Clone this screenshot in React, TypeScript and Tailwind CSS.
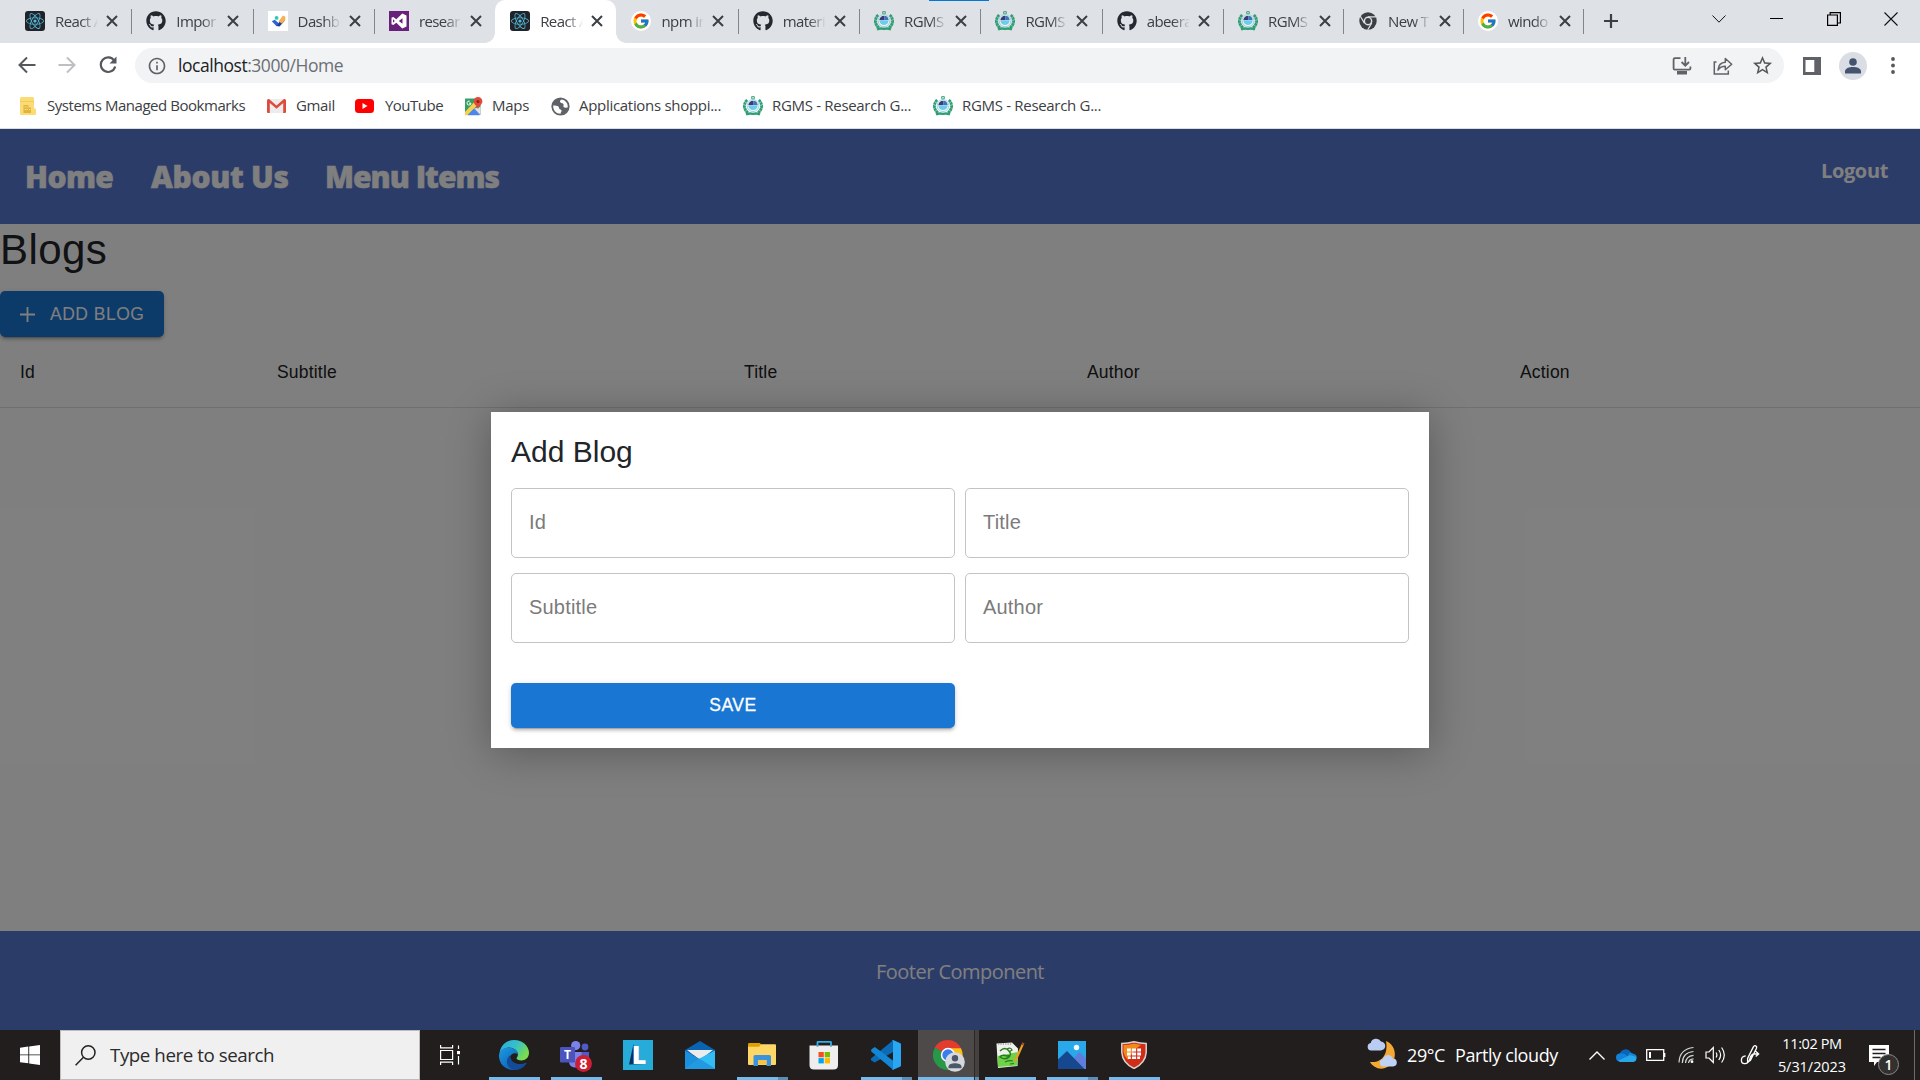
import type { ReactNode } from "react";
import { FaGithub, FaReact } from "react-icons/fa";
import { FcGoogle } from "react-icons/fc";
import { MdInfoOutline, MdStarBorder } from "react-icons/md";

/* ---------- favicons ---------- */

function ReactMark() {
  return (
    <span className="flex size-5 items-center justify-center rounded-[3px] bg-[#20232a]">
      <FaReact className="size-[18px] text-[#53b9d5]" />
    </span>
  );
}

function GitHubMark() {
  return <FaGithub className="size-5 text-[#24292f]" />;
}

function GoogleMark() {
  return (
    <span className="flex size-5 items-center justify-center rounded-full bg-white">
      <FcGoogle className="size-[18px]" />
    </span>
  );
}

function DashboardMark() {
  return (
    <svg viewBox="0 0 20 20" className="size-5">
      <rect width="20" height="20" fill="#fff" />
      <path d="M3.800 10.300l3-1.600 4 3.600-2.200 3z" fill="#2b63d9" />
      <path d="M8.400 15L13.800 7.500l3.100 2-5.300 6z" fill="#1d3f9b" />
      <path d="M10.500 10.500l4.500-6 2.300 1.200v3.200l-3.500 3.600z" fill="#f8ae52" />
      <circle cx="8.600" cy="6.900" r="1.900" fill="#30c7b5" />
    </svg>
  );
}

function VisualStudioMark() {
  return (
    <svg viewBox="0 0 20 20" className="size-5">
      <rect width="20" height="20" fill="#68217a" />
      <path d="M13.300 2.600L17.500 4.400v11.200l-4.200 1.800-6-5.600-3 2.300-1.800-.9V6.800l1.800-.9 3 2.300zM13.500 7.200L9.800 10l3.700 2.800zM4 8.200v3.600L5.800 10z" fill="#fff" fillRule="evenodd" />
    </svg>
  );
}

function RgmsMark() {
  return (
    <svg viewBox="0 0 20 20" className="size-5">
      <path d="M4.200 4C.4 7.200.4 13.600 5 16.800M15.800 4c3.800 3.200 3.800 9.600-.8 12.800" fill="none" stroke="#2f9e74" strokeWidth="2.900" strokeDasharray="2.600 .4" />
      <path d="M3 18.300q3.500-1.500 7-.4q3.500-1.100 7 .4" fill="none" stroke="#2f9e74" strokeWidth="2.400" />
      <circle cx="10" cy="1.700" r="1.400" fill="none" stroke="#4fae88" strokeWidth="1.200" />
      <circle cx="10" cy="9.600" r="5.900" fill="#fff" stroke="#8ccbd8" strokeWidth=".9" />
      <path d="M5.300 9.300a4.700 4.700 0 0 1 4.900-4.600v4.600z" fill="#383c78" />
      <path d="M10.200 4.700a4.700 4.700 0 0 1 4.500 4.600h-4.500z" fill="#4273b8" />
      <path d="M5.300 9.400h9.400a4.700 4.700 0 0 1-9.400 0z" fill="#6bcdec" />
    </svg>
  );
}

function ChromeGrayMark() {
  return (
    <svg viewBox="0 0 20 20" className="size-5">
      <circle cx="10" cy="10" r="8.700" fill="#3c4043" />
      <circle cx="10" cy="10" r="4.400" fill="#dee1e6" />
      <circle cx="10" cy="10" r="2.900" fill="#3c4043" />
      <path d="M10 5.800h8M6.400 12.100L2.300 5.300M13.700 12.100L9.700 18.700" stroke="#dee1e6" strokeWidth="1.200" />
    </svg>
  );
}

function GlobeMark() {
  return (
    <svg viewBox="0 0 20 20" className="mx-px size-[19px]">
      <circle cx="10" cy="10" r="9.600" fill="#5f6368" />
      <path d="M11.500 2.500C9.500 3 9 4.500 9.800 5.600c1.200 1.400 3 .6 3.400 2 .4 1.300-1 2.200.4 3.200 1.200.8 3.400.2 4 .2.500-4-2-7.600-6.100-8.500z" fill="#fff" />
      <path d="M2.300 9c1.700.2 4.700 0 5.700 1.300.8 1.100.2 2 1.300 2.500 1.200.6 2 .6 1.800 1.900-.2 1.200-1 1.500-1 3C5.500 17.700 2 14 2.300 9z" fill="#fff" />
    </svg>
  );
}

/* ---------- browser chrome ---------- */

type Tab = { title: string; icon: ReactNode };

const tabs: Tab[] = [
  { title: "React A", icon: <ReactMark /> },
  { title: "Impor", icon: <GitHubMark /> },
  { title: "Dashb", icon: <DashboardMark /> },
  { title: "resear", icon: <VisualStudioMark /> },
  { title: "React A", icon: <ReactMark /> },
  { title: "npm in", icon: <GoogleMark /> },
  { title: "materi", icon: <GitHubMark /> },
  { title: "RGMS", icon: <RgmsMark /> },
  { title: "RGMS", icon: <RgmsMark /> },
  { title: "abeera", icon: <GitHubMark /> },
  { title: "RGMS", icon: <RgmsMark /> },
  { title: "New T", icon: <ChromeGrayMark /> },
  { title: "windo", icon: <GoogleMark /> },
];

const ACTIVE = 4;

function TabItem({ tab, index }: { tab: Tab; index: number }) {
  const active = index === ACTIVE;
  return (
    <div
      className={
        "relative flex h-[43px] shrink-0 items-center pb-px pl-[15px] " +
        (index > 9 ? "w-[120px] " : "w-[121.3px] ") +
        (active ? "rounded-t-[10px] bg-white" : "")
      }
    >
      {tab.icon}
      <span className="ml-[10px] w-[43px] overflow-hidden text-[15px] leading-[20px] tracking-[-0.6px] whitespace-nowrap text-[#3c4043] [mask-image:linear-gradient(to_right,black_60%,transparent)]">
        {tab.title}
      </span>
      <svg viewBox="0 0 12 12" className="ml-[8px] size-3" stroke="#3c4043" strokeWidth="2">
        <path d="M1 1l10 10M11 1L1 11" />
      </svg>
      {index !== ACTIVE && index !== ACTIVE - 1 && <span className="absolute top-[9px] -right-px h-[25px] w-px bg-[#80868b]" />}
      {active && (
        <>
          <span className="absolute bottom-0 -left-[10px] size-[10px] bg-[radial-gradient(circle_at_0_0,transparent_9.5px,white_10px)]" />
          <span className="absolute -right-[10px] bottom-0 size-[10px] bg-[radial-gradient(circle_at_100%_0,transparent_9.5px,white_10px)]" />
        </>
      )}
    </div>
  );
}

function WindowControls() {
  const cell = "flex h-[37px] w-[57.5px] items-center justify-center";
  return (
    <div className="ml-auto flex">
      <div className={cell}>
        <svg viewBox="0 0 14 8" className="h-2 w-3.5" fill="none" stroke="#111" strokeWidth="1">
          <path d="M.5.500L7 7.200 13.500.500" />
        </svg>
      </div>
      <div className={cell}>
        <span className="h-px w-[13px] bg-black" />
      </div>
      <div className={cell}>
        <svg viewBox="0 0 14 14" className="size-3.5" fill="none" stroke="#000" strokeWidth="1.200">
          <path d="M.6 3h9.800v10.400H.6zM3.200 3V.600h10.200v10.400h-3" />
        </svg>
      </div>
      <div className={cell}>
        <svg viewBox="0 0 14 14" className="size-3.5" stroke="#111" strokeWidth="1.100">
          <path d="M.5.500l13 13M13.500.500l-13 13" />
        </svg>
      </div>
    </div>
  );
}

function TabStrip() {
  return (
    <div className="relative flex h-[43px] shrink-0 bg-[#dee1e6] pl-[10px]">
      {tabs.map((tab, i) => (
        <TabItem key={i} tab={tab} index={i} />
      ))}
      <div className="flex w-[56px] items-center justify-center pb-px">
        <svg viewBox="0 0 14 14" className="size-3.5" stroke="#3c4043" strokeWidth="2.200">
          <path d="M7 0v14M0 7h14" />
        </svg>
      </div>
      <WindowControls />
      <span className="absolute top-0 left-[929px] h-px w-[60px] bg-[#0078d7]" />
    </div>
  );
}

function AddressBar() {
  return (
    <div className="flex h-[45px] shrink-0 items-center bg-white">
      <div className="flex w-[135px] items-center pb-px pl-[18px]">
        <svg viewBox="0 0 18 18" className="size-[18px]" fill="none" stroke="#55585c" strokeWidth="2">
          <path d="M17.500 9H2M9 1.500L1.500 9 9 16.500" />
        </svg>
        <svg viewBox="0 0 18 18" className="ml-[22px] size-[18px]" fill="none" stroke="#bdbfc2" strokeWidth="2">
          <path d="M.5 9H16M9 1.500L16.500 9 9 16.500" />
        </svg>
        <svg viewBox="0 0 18 18" className="ml-[23px] size-[18px]" fill="none" stroke="#55585c" strokeWidth="2.200">
          <path d="M15.200 4.600A7.300 7.300 0 1 0 16.200 10.500" />
          <path d="M17.500.500v7h-7z" fill="#55585c" stroke="none" />
        </svg>
      </div>
      <div className="flex h-[35px] w-[1649px] items-center rounded-full bg-[#f1f3f4] pl-[12px]">
        <MdInfoOutline className="size-5 text-[#5f6368]" />
        <p className="mb-px ml-[11px] text-[17.5px] leading-[24px] tracking-[-0.46px] text-[#6b6f74]">
          <span className="text-[#202124]">localhost</span>:3000/Home
        </p>
        <svg viewBox="0 0 20 18" className="ml-auto h-[18px] w-5" fill="none" stroke="#5f6368" strokeWidth="1.800">
          <path d="M8.500 1.200H2.800q-1.200 0-1.200 1.200v9q0 1.200 1.200 1.200h14.400q1.200 0 1.200-1.200V9.500" />
          <path d="M13.300 0v8M9.600 5l3.700 3.700L17 5" />
          <path d="M5 14h10v3.500H5z" fill="#5f6368" stroke="none" />
        </svg>
        <svg viewBox="0 0 20 18" className="ml-[21px] h-[18px] w-5" fill="none" stroke="#5f6368" strokeWidth="1.500">
          <path d="M3.500 5H1.300v12h14v-3.500" />
          <path d="M5 13c.4-5 3-7.600 7.300-7.800V1.500l6.400 5.700-6.400 5.600V9.300C9 9.300 6.700 10.400 5 13z" strokeLinejoin="round" />
        </svg>
        <MdStarBorder className="mr-[10px] ml-[18px] size-[23px] text-[#55585c]" />
      </div>
      <div className="flex flex-1 items-center">
        <svg viewBox="0 0 18 18" className="ml-[19px] size-[18px]">
          <path d="M0 0h18v18H0zM2.500 3v12h8.800V3z" fill="#5f6368" fillRule="evenodd" />
        </svg>
        <span className="ml-[18px] flex size-7 items-center justify-center rounded-full bg-[#dadde4]">
          <svg viewBox="0 0 16 16" className="size-4" fill="#44546f">
            <circle cx="8" cy="4" r="3.800" />
            <path d="M0 15.500v-2.300C0 10.500 4 9 8 9s8 1.500 8 4.200v2.300z" />
          </svg>
        </span>
        <svg viewBox="0 0 4 17" className="ml-[24px] h-[17px] w-1" fill="#55585c">
          <circle cx="2" cy="2" r="1.900" />
          <circle cx="2" cy="8.500" r="1.900" />
          <circle cx="2" cy="15" r="1.900" />
        </svg>
      </div>
    </div>
  );
}

function FolderMark() {
  return (
    <svg viewBox="0 0 16 18" className="h-[18px] w-4">
      <path d="M1.500 0h11q1.500 0 1.500 1.500V11l2 1v4.500q0 1.500-1.500 1.500h-13Q0 18 0 16.500v-15Q0 0 1.500 0z" fill="#fadb75" />
      <path d="M0 4h14v1H0z" fill="#f5cd54" />
      <path d="M3.500 8h5v8h-5zM8.500 10.500H11V16H8.500z" fill="#e2b53a" />
      <path d="M4.700 9.500h1v1h-1zM6.600 9.500h1v1h-1zM4.700 12h1v1h-1zM6.600 12h1v1h-1zM9.300 12h1v1h-1z" fill="#fff0b8" />
    </svg>
  );
}

function GmailMark() {
  return (
    <svg viewBox="0 0 19 14" className="h-3.5 w-[19px]">
      <path d="M1 0h17v14H1z" fill="#ececec" />
      <path d="M0 1.500Q0 0 1.500 0H2l7.500 6.500L17 0h.5Q19 0 19 1.500V13q0 1-1 1h-1.800V4L9.500 9.800 2.800 4v10H1q-1 0-1-1z" fill="#dd4b3e" />
    </svg>
  );
}

function YouTubeMark() {
  return (
    <svg viewBox="0 0 19 14" className="h-3.5 w-[19px]">
      <rect width="19" height="14" rx="3.500" fill="#f00" />
      <path d="M7.500 4v6l5-3z" fill="#fff" />
    </svg>
  );
}

function MapsMark() {
  return (
    <svg viewBox="0 0 19 19" className="size-[19px]">
      <path d="M1.500 1.500h12l3 3v12l-1.500 1.500H2L1 17V2z" fill="#34a064" />
      <path d="M9 9l7.500 8v1H2z" fill="#5b92ee" />
      <path d="M1 15L13 2l3.500 3L3.500 18.200H1z" fill="#f7d04c" />
      <path d="M3.500 18.200L9.500 12l6 6.200z" fill="#4d86e8" />
      <path d="M16.500 10v8l-6-6.500z" fill="#e4e4e4" />
      <path d="M5.700 4.200a2 2 0 1 0 1.300 2H5" fill="none" stroke="#fff" strokeWidth="1" />
      <path d="M14 0a4.400 4.400 0 0 1 4.400 4.400c0 2.800-3.400 3.900-4.400 8-1-4.100-4.400-5.200-4.400-8A4.400 4.400 0 0 1 14 0z" fill="#e2493b" />
      <circle cx="14" cy="4.400" r="1.500" fill="#8a2119" />
    </svg>
  );
}

function Bookmark({ icon, className, children }: { icon: ReactNode; className: string; children: ReactNode }) {
  return (
    <div className={"flex items-center text-[15px] leading-[20px] whitespace-nowrap text-[#3c4043] " + className}>
      {icon}
      <span className="mb-[2px]">{children}</span>
    </div>
  );
}

function BookmarksBar() {
  return (
    <div className="flex h-[41px] shrink-0 items-center border-b border-[#dadce0] bg-white pb-[4px] pl-[20px]">
      <Bookmark icon={<FolderMark />} className="w-[247px] gap-[11px] tracking-[-0.46px]">Systems Managed Bookmarks</Bookmark>
      <Bookmark icon={<GmailMark />} className="w-[88px] gap-[10px] tracking-[-0.34px]">Gmail</Bookmark>
      <Bookmark icon={<YouTubeMark />} className="w-[109px] gap-[11px] tracking-[-0.52px]">YouTube</Bookmark>
      <Bookmark icon={<MapsMark />} className="w-[86px] gap-[9px] tracking-[-0.29px]">Maps</Bookmark>
      <Bookmark icon={<GlobeMark />} className="w-[193px] gap-[8px] tracking-[-0.3px]">Applications shoppi...</Bookmark>
      <Bookmark icon={<RgmsMark />} className="w-[190px] gap-[9px] tracking-[-0.31px]">RGMS - Research G...</Bookmark>
      <Bookmark icon={<RgmsMark />} className="gap-[9px] tracking-[-0.31px]">RGMS - Research G...</Bookmark>
    </div>
  );
}

/* ---------- page ---------- */

function SiteHeader() {
  return (
    <header className="flex h-[95px] shrink-0 justify-between bg-[#5878d2] text-white">
      <nav className="flex pt-[28px] pl-[25px] text-[30px] leading-[40px] font-extrabold whitespace-nowrap [-webkit-text-stroke:0.5px_white]">
        <span className="w-[126px] tracking-[-0.6px]">Home</span>
        <span className="w-[174px] tracking-[-0.3px]">About Us</span>
        <span className="tracking-[-0.98px]">Menu Items</span>
      </nav>
      <span className="pt-[30px] pr-[32px] text-[20px] leading-[24px] font-bold tracking-[-0.36px]">Logout</span>
    </header>
  );
}

function BlogTable() {
  return (
    <div className="grid h-[71px] grid-cols-[257px_467px_343px_433px_1fr] border-b border-[#e0e0e0] font-['Liberation_Sans',Arial,sans-serif] text-[17.5px] leading-[30px] tracking-[0.19px] text-[#212121]">
      {["Id", "Subtitle", "Title", "Author", "Action"].map((h) => (
        <span key={h} className="pt-[20px] pl-[20px]">{h}</span>
      ))}
    </div>
  );
}

function Field({ label }: { label: string }) {
  return (
    <div className="flex h-[70px] items-center rounded-[5px] border border-[#c4c4c4] pb-[2px] pl-[17px] text-[20px] leading-[28px] tracking-[0.19px] text-[#7b7b7b]">
      {label}
    </div>
  );
}

function AddBlogDialog() {
  return (
    <div className="h-[336px] w-[938px] bg-white p-[20px] font-['Liberation_Sans',Arial,sans-serif] shadow-[0_4px_40px_rgba(0,0,0,0.3)]">
      <h2 className="text-[30px] leading-[40px] text-[#212529]">Add Blog</h2>
      <div className="mt-[16px] grid grid-cols-2 gap-x-[10px] gap-y-[15px]">
        <Field label="Id" />
        <Field label="Title" />
        <Field label="Subtitle" />
        <Field label="Author" />
        <button className="mt-[25px] h-[45px] rounded-[5px] bg-[#1976d2] pb-px text-[17.5px] font-normal tracking-[0.5px] text-white shadow-[0_4px_1px_-3px_rgba(0,0,0,0.2),0_3px_3px_0_rgba(0,0,0,0.14),0_1px_6px_0_rgba(0,0,0,0.12)] [-webkit-text-stroke:0.3px_white]">
          SAVE
        </button>
      </div>
    </div>
  );
}

function BlogPage() {
  return (
    <main className="relative flex h-[901px] shrink-0 flex-col bg-white">
      <SiteHeader />
      <h1 className="pt-px font-['Liberation_Sans',Arial,sans-serif] text-[42px] leading-[50px] tracking-[0.4px] text-[#212529]">Blogs</h1>
      <button className="mt-[16px] flex h-[46px] w-[164px] items-center rounded-[5px] bg-[#1976d2] pl-[20px] font-['Liberation_Sans',Arial,sans-serif] text-[17.5px] tracking-[0.5px] text-white shadow-[0_4px_1px_-3px_rgba(0,0,0,0.2),0_3px_3px_0_rgba(0,0,0,0.14),0_1px_6px_0_rgba(0,0,0,0.12)]">
        <svg viewBox="0 0 15 15" className="mr-[15px] size-[15px]" stroke="white" strokeWidth="1.800">
          <path d="M7.500 0v15M0 7.500h15" />
        </svg>
        ADD BLOG
      </button>
      <BlogTable />
      <footer className="mt-auto h-[99px] bg-[#5878d2] pt-[29px] text-center text-[20px] leading-[24px] tracking-[-0.53px] text-white">
        Footer Component
      </footer>
      <div className="absolute inset-0 flex items-start bg-black/50 pt-[283px] pl-[491px]">
        <AddBlogDialog />
      </div>
    </main>
  );
}

/* ---------- taskbar ---------- */

function EdgeIcon() {
  return (
    <svg viewBox="0 0 30 30" className="size-[30px]">
      <defs>
        <linearGradient id="edgeTop" x1="0" y1="0" x2="1" y2=".5">
          <stop offset="0" stopColor="#2aa9e0" />
          <stop offset=".55" stopColor="#35c1c9" />
          <stop offset="1" stopColor="#7bdc4c" />
        </linearGradient>
        <linearGradient id="edgeLow" x1="0" y1="0" x2=".7" y2="1">
          <stop offset="0" stopColor="#1b9de2" />
          <stop offset="1" stopColor="#0f5fb5" />
        </linearGradient>
      </defs>
      <path d="M.6 13C1.500 5.500 7.500 0 15.200 0 23.500 0 30 6 30 12.800c0 5-3.700 7.700-7.600 7.700-3.400 0-5.300-1.400-4.800-2.500 1-1.500 1.300-2.400 1.300-3.600 0-3.900-4.300-6.900-9-6.900-4 0-7.400 2.200-9.300 5.500z" fill="url(#edgeTop)" />
      <path d="M0 15C.4 10.500 4.600 7.500 9.500 7.500c5 0 9.400 3 9.400 6.600-4.400-2.300-8.400 1-8.400 5.400 0 5.300 4.200 9.200 8.500 10-8 2.500-19.500-3-19-14.500z" fill="url(#edgeLow)" />
      <path d="M11 15.200c-2 1.800-3.400 4-3.100 7 .4 3.900 3.600 7.200 8 7.800 5.200-.3 9.200-2.800 11.600-6.600.3-.6-.2-1-.8-.6-4.800 2.400-13 1.400-14.800-4-.4-1.300-.4-2.500-.9-3.600z" fill="#124c98" />
    </svg>
  );
}

function TeamsIcon() {
  return (
    <span className="relative block h-[30px] w-8">
      <svg viewBox="0 0 32 30" className="h-[30px] w-8">
        <circle cx="25" cy="7" r="3.400" fill="#5059c9" />
        <circle cx="15.700" cy="5.600" r="4.600" fill="#7b83eb" />
        <path d="M20 12h9v9q-1 4-6 4h-3z" fill="#5059c9" />
        <path d="M9 12h12.500v9q0 6.500-6 6.500-5.500 0-6.500-5z" fill="#7b83eb" />
        <rect y="7" width="15" height="15.500" rx="1.200" fill="#4b53bc" />
      </svg>
      <span className="absolute top-[7px] left-0 w-[15px] text-center text-[12px] leading-[15px] font-bold text-white">T</span>
      <span className="absolute top-[15px] left-[15px] size-[17px] rounded-full bg-[#cc1f36] text-center text-[14px] leading-[17px] font-bold text-white">8</span>
    </span>
  );
}

function LIcon() {
  return (
    <span className="relative flex size-[30px] items-center justify-center bg-[#27abd9]">
      <svg viewBox="0 0 30 30" className="absolute inset-0">
        <path d="M10.500 4L6 24.500l15-.6-8-4z" fill="#0b3156" />
      </svg>
      <span className="relative -top-px left-px text-[25px] leading-[28px] font-extrabold text-white">L</span>
    </span>
  );
}

function MailIcon() {
  return (
    <svg viewBox="0 0 30 28" className="h-7 w-[30px]">
      <path d="M0 9L15 0l15 9v5H0z" fill="#0a63b0" />
      <path d="M2 9h26L15 19z" fill="#ececec" />
      <path d="M0 9.500L30 27v1H1q-1 0-1-1z" fill="#1b90dd" />
      <path d="M30 9.500v17.700q0 .8-1 .8L14 17.800z" fill="#33bcf2" />
      <path d="M14 17.500L0 27.500q.3.500 1 .5h28q.8 0 1-.6z" fill="#2199e3" />
    </svg>
  );
}

function ExplorerIcon() {
  return (
    <svg viewBox="0 0 28 24" className="h-6 w-7">
      <path d="M0 1.200Q0 0 1.200 0H12l2 3v4H0z" fill="#e0a000" />
      <path d="M0 3.800h11l2-2.500h14q1 0 1 1V21q0 1-1 1H1q-1 0-1-1z" fill="#ffd766" />
      <path d="M5.500 13.500Q5.500 12 7 12h14.500q1.500 0 1.500 1.500V23h-4.500v-6h-8.500v6H5.500z" fill="#3b93db" />
      <path d="M10 17h8.500v4.500H10z" fill="#f6c348" />
    </svg>
  );
}

function StoreIcon() {
  return (
    <svg viewBox="0 0 30 30" className="size-[30px]">
      <path d="M8.500 8V2.300Q8.500 1.800 9 1.800h12.500q.5 0 .5.500V8" fill="none" stroke="#2fb0ea" strokeWidth="1.800" />
      <path d="M.5 5.500H29V25q0 4.500-4.500 4.500H5Q.5 29.500.5 25z" fill="#eeeeee" />
      <path d="M8.500 5.500v1M22 5.500v1" stroke="#1374b8" strokeWidth="1.800" />
      <path d="M9.500 12h5.300v5.300H9.500z" fill="#f25022" />
      <path d="M15.700 12H21v5.300h-5.300z" fill="#7fba00" />
      <path d="M9.500 18.100h5.300v5.300H9.500z" fill="#00a4ef" />
      <path d="M15.700 18.100H21v5.300h-5.300z" fill="#ffb900" />
    </svg>
  );
}

function VsCodeIcon() {
  return (
    <svg viewBox="0 0 30 30" className="size-[30px]">
      <path d="M22.400 0L30 3.500v4L3.600 22.400 0 20.200v-1.700z" fill="#0b6cb5" />
      <path d="M.5 9.300L3.800 7l19.700 14.700L22.400 30 0 11.300z" fill="#1387d6" />
      <path d="M22.200.2L29 3.300q1 .5 1 1.500v20.400q0 1-1 1.500l-6.800 3.100q-.8.200-1.500-.5 1.300.5 1.300-1.300V2q0-1.700-1.300-1.300.7-.7 1.500-.5z" fill="#2aa6f2" />
    </svg>
  );
}

function ChromeIcon() {
  return (
    <svg viewBox="0 0 32 32" className="size-8">
      <path d="M14.500 15L1.600 7.600A15 15 0 0 1 28 8.200z" fill="#e33b2e" />
      <path d="M14.500 15V8.200H28A15 15 0 0 1 15 30z" fill="#fbc116" />
      <path d="M14.500 15l1 15A15 15 0 0 1 2 7.500z" fill="#279847" />
      <circle cx="15" cy="15" r="7.200" fill="#fff" />
      <circle cx="15" cy="15" r="5.700" fill="#3b7ded" />
      <circle cx="22" cy="22" r="9.800" fill="#d5d9df" />
      <circle cx="22" cy="18.300" r="3.200" fill="#4c5768" />
      <path d="M15.500 28.200v-1.500c0-2.600 3.500-3.500 6.500-3.500s6.500.900 6.500 3.500v1.500z" fill="#4c5768" />
    </svg>
  );
}

function NotepadIcon() {
  return (
    <svg viewBox="0 0 30 30" className="size-[30px]">
      <path d="M1.500 3.500L17 2.500l6 6-.5 17.500L3 28z" fill="#eef1ec" />
      <path d="M2.600 16l20-4-.3 13.500L3 27z" fill="#6fd24a" />
      <path d="M5 11q5-5 9 0t-2 5q-5-2-7 1 6 4 10-1" fill="none" stroke="#2a7a1e" strokeWidth="1.500" />
      <path d="M12 9q4-2 5 1l-3 2M10 22q4-2 8-1M15 24l4-.5" fill="none" stroke="#2a7a1e" strokeWidth="1.200" />
      <path d="M3 4h14" stroke="#9aa09a" strokeWidth="1.500" strokeDasharray="1.200 1.200" />
      <path d="M27.500 2.500l1.800 1L22 20l-2.500 2 .4-3.500z" fill="#e8a021" />
      <path d="M27.500 2.500l1.800 1-1 2-1.800-1z" fill="#a8432c" />
    </svg>
  );
}

function PhotosIcon() {
  return (
    <svg viewBox="0 0 28 28" className="size-7">
      <path d="M0 0h28v28H0z" fill="#29a8ea" />
      <path d="M11 22L21.500 11 28 17.500V28H11z" fill="#5f7edb" />
      <path d="M0 18.500L9 10l17.500 18H0z" fill="#15488f" />
      <circle cx="18.500" cy="6.500" r="2.700" fill="#f3fbff" />
    </svg>
  );
}

function ShieldIcon() {
  return (
    <svg viewBox="0 0 26 28" className="h-7 w-[26px]">
      <path d="M.8 2.500Q7 2.500 13 .7q6 1.800 12.200 1.800v9Q24.500 22 13 27.500 1.500 22 .8 11.500z" fill="#cf2d18" stroke="#d8d3cc" strokeWidth="1.500" />
      <path d="M2.500 4Q8 4 13 2.500L20 4q-8 5-13 15Q3 15 2.500 11z" fill="#f08a1d" />
      <path d="M6 7.500h3.800v3H6zM10.900 7.500h4.200v3h-4.200zM16.200 7.500H20v3h-3.800zM6 11.500h3.800v3H6zM10.900 11.500h4.200v3h-4.200zM16.200 11.500H20v3h-3.800zM7 15.500h2.800V18H7zM10.900 15.500h4.200V18h-4.200zM16.200 15.500H19V18h-2.800z" fill="#fff" />
    </svg>
  );
}

type TaskApp = { name: string; icon: ReactNode; state: "idle" | "open" | "stacked" | "focused" };

const apps: TaskApp[] = [
  { name: "edge", icon: <EdgeIcon />, state: "open" },
  { name: "teams", icon: <TeamsIcon />, state: "open" },
  { name: "l", icon: <LIcon />, state: "idle" },
  { name: "mail", icon: <MailIcon />, state: "idle" },
  { name: "explorer", icon: <ExplorerIcon />, state: "stacked" },
  { name: "store", icon: <StoreIcon />, state: "idle" },
  { name: "vscode", icon: <VsCodeIcon />, state: "stacked" },
  { name: "chrome", icon: <ChromeIcon />, state: "focused" },
  { name: "notepad", icon: <NotepadIcon />, state: "open" },
  { name: "photos", icon: <PhotosIcon />, state: "stacked" },
  { name: "shield", icon: <ShieldIcon />, state: "open" },
];

function TaskbarApp({ app }: { app: TaskApp }) {
  if (app.state === "focused") {
    return (
      <div className="flex h-[50px] w-[62px] shrink-0 pl-px">
        <div className="flex w-[56px] shrink-0 flex-col items-center bg-[#4d4a49]">
          <span className="flex flex-1 items-center pt-[5px] pl-[6px]">{app.icon}</span>
          <span className="h-[3px] w-full bg-[#76b9ed]" />
        </div>
        <div className="flex w-[5px] shrink-0 flex-col border-l border-[#2c2a29] bg-[#444140]">
          <span className="mt-auto h-[3px] bg-[#5b8db5]" />
        </div>
      </div>
    );
  }
  return (
    <div className="flex h-[50px] w-[62px] shrink-0 flex-col items-center">
      <span className="flex flex-1 items-center pt-[3px]">{app.icon}</span>
      <span className="flex h-[3px] w-[51px]">
        {app.state !== "idle" && <span className="flex-1 bg-[#76b9ed]" />}
        {app.state === "stacked" && <span className="w-[10px] bg-[#5b8db5]" />}
      </span>
    </div>
  );
}

function WeatherIcon() {
  return (
    <svg viewBox="0 0 30 31" className="h-[31px] w-[30px]">
      <path d="M19 3c12 5 12 22-1 27-6 2-12-1-15-6 8 1 19-4 16-21z" fill="#f4a934" />
      <path d="M4 12.500a3.800 3.800 0 0 1-.3-7.500A5.600 5.600 0 0 1 14 3.500a4.500 4.500 0 0 1-.5 9z" fill="#b9cdf3" />
      <path d="M16 28.500a3.800 3.800 0 0 1 0-7.500 5 5 0 0 1 9.600-.5 4 4 0 0 1 .4 8z" fill="#bfd2f5" />
    </svg>
  );
}

function Tray() {
  return (
    <div className="ml-auto flex h-full items-center text-white">
      <span className="mb-[3px]">
        <WeatherIcon />
      </span>
      <span className="ml-[10px] w-[48px] text-[18px] tracking-[-0.4px] whitespace-nowrap">29°C</span>
      <span className="w-[134px] text-[18px] tracking-[-0.38px] whitespace-nowrap">Partly cloudy</span>
      <svg viewBox="0 0 16 9" className="h-[9px] w-4" fill="none" stroke="#fff" strokeWidth="1.400">
        <path d="M.5 8.500L8 1l7.500 7.500" />
      </svg>
      <svg viewBox="0 0 21 14" className="ml-[11px] h-3.5 w-[21px]">
        <path d="M3.500 8A6.200 6.200 0 0 1 14.800 4L17 8.500 6 12z" fill="#0a64b8" />
        <path d="M13 5a5 5 0 0 1 4.300.8 4 4 0 0 1 3.400 4.500L12 8z" fill="#1483d5" />
        <path d="M4 5.500q3.500-.8 6 1.500l8 6.500H4a4 4 0 0 1 0-8z" fill="#1182d8" />
        <path d="M2 12.800L11 8.500q3.500-2.300 6-.5a3 3 0 0 1 3.500 3q-.3 2.700-3 3H4z" fill="#28a8ea" />
      </svg>
      <svg viewBox="0 0 20 12" className="ml-[9px] h-3 w-5" fill="none" stroke="#fff" strokeWidth="1.300">
        <path d="M.7.700h17v10.600H.7zM18.700 4v4" />
        <path d="M3 3h2v6H3z" fill="#fff" stroke="none" />
      </svg>
      <svg viewBox="0 0 16 18" className="ml-[12px] h-[18px] w-4" fill="none" stroke="#d8d8d8" strokeWidth="1.200">
        <path d="M1 16.500Q1.500 3 15.500 1.500M4.300 17Q4.500 6.500 15.500 5.500M7.500 17Q8 10 15.500 9.300M10.500 17Q11 13 15.500 12.800" />
        <circle cx="14" cy="15.700" r="1.400" fill="#fff" stroke="none" />
      </svg>
      <svg viewBox="0 0 21 20" className="ml-[11px] h-5 w-[21px]" fill="none" stroke="#fff" strokeWidth="1.200">
        <path d="M1 7h3l4.300-4.500v15L4 13H1zM11 7.500q1.800 2.500 0 5M13.800 5q3.600 5 0 10M16.600 2.500q5.400 7.500 0 15" />
      </svg>
      <svg viewBox="0 0 20 23" className="ml-[14px] h-[22px] w-5" fill="none" stroke="#fff" strokeWidth="1.400">
        <path d="M7.500 15L13.500 3q1-1.800 2.500-1t.8 2.500L10.500 17l-3 2zM5.500 12.500Q1 13 1 17t4 3.500q4-.5 5-5.500 1.500-5 5-4.500h3.500M16 7.500l3 3-3 2.500" />
      </svg>
      <div className="ml-[17px] flex w-[70px] flex-col items-center text-[14.5px] leading-[23.5px] whitespace-nowrap">
        <span className="tracking-[-0.4px]">11:02 PM</span>
        <span className="tracking-[-0.05px]">5/31/2023</span>
      </div>
      <div className="relative ml-[22px] h-full w-[46px] border-r border-[#6b6b6b]">
        <svg viewBox="0 0 20 21" className="absolute top-[15px] left-0 h-[21px] w-5">
          <path d="M0 0h20v17H8l-3 4v-4H0z" fill="#fff" />
          <path d="M3.500 4.500h13M3.500 8.500h13M3.500 12.500h8" stroke="#211e1d" strokeWidth="1.300" />
        </svg>
        <span className="absolute top-[24px] left-[9px] size-[21px] rounded-full border border-[#8a8a8a] bg-[#333130] text-center text-[14px] leading-[19px] font-semibold">1</span>
      </div>
      <span className="w-[5px]" />
    </div>
  );
}

function Taskbar() {
  return (
    <div className="flex h-[50px] shrink-0 bg-[#211e1d]">
      <div className="flex w-[60px] shrink-0 items-center justify-center">
        <svg viewBox="0 0 20 20" className="size-5" fill="#fff">
          <path d="M0 2.800L8.300 1.600v7.800H0zM9.200 1.500L20 0v9.400H9.200zM0 10.300h8.300V18.300L0 17.200zM9.200 10.300H20V20L9.200 18.400z" />
        </svg>
      </div>
      <div className="flex w-[360px] shrink-0 items-center border border-[#bdbdbd] bg-[#f0f0f0] pl-[14px]">
        <svg viewBox="0 0 21 21" className="size-[21px]" fill="none" stroke="#222" strokeWidth="1.500">
          <circle cx="13.300" cy="7.500" r="6.700" />
          <path d="M8.500 12.300L.6 20.200" />
        </svg>
        <span className="ml-[14px] text-[18.75px] leading-[24px] tracking-[-0.45px] text-[#2b2b2b]">Type here to search</span>
      </div>
      <div className="flex w-[63px] shrink-0 items-center pl-[20px]">
        <svg viewBox="0 0 20 20" className="size-5" fill="none" stroke="#fff" strokeWidth="1.200">
          <path d="M.6 0v2.800h12V0M.6 5.500h12v9H.6zM.6 20v-2.800h12V20M18.500.500v3.500M18.500 11v8.500" />
          <path d="M17 6h3v3.200h-3z" fill="#fff" stroke="none" />
        </svg>
      </div>
      {apps.map((app) => (
        <TaskbarApp key={app.name} app={app} />
      ))}
      <Tray />
    </div>
  );
}

export default function App() {
  return (
    <div className="flex h-[1080px] w-[1920px] flex-col overflow-hidden bg-white font-['Open_Sans','Noto_Sans',sans-serif]">
      <TabStrip />
      <AddressBar />
      <BookmarksBar />
      <BlogPage />
      <Taskbar />
    </div>
  );
}
